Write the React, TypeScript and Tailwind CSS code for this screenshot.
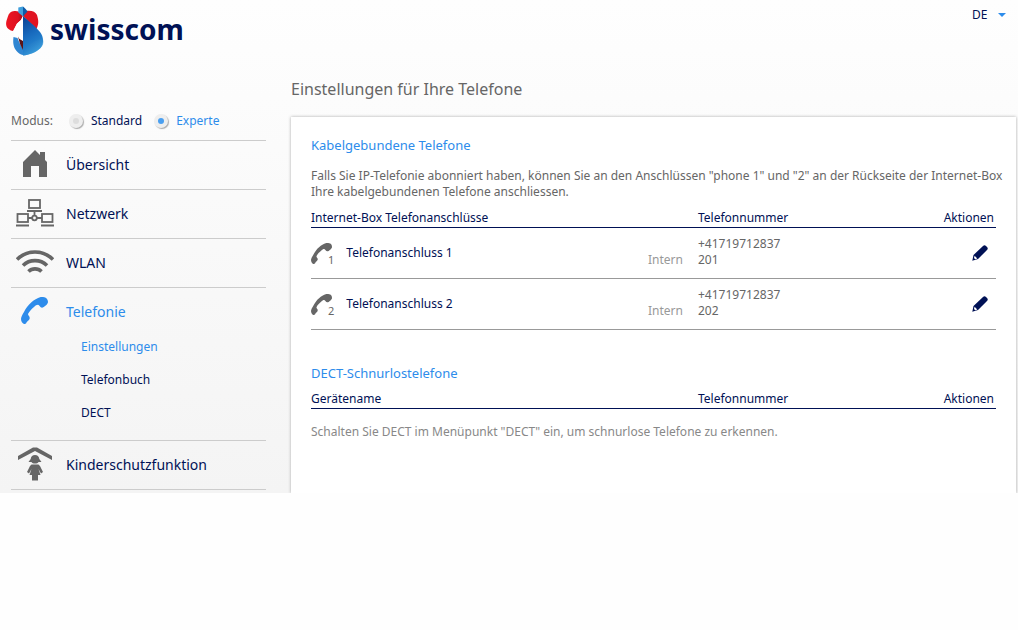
import { ReactNode, useState } from "react";

interface IPhoneLine {
  id: number;
  name: string;
  phone: string;
  intern: string;
}

const phoneLines: IPhoneLine[] = [
  { id: 1, name: "Telefonanschluss 1", phone: "+41719712837", intern: "201" },
  { id: 2, name: "Telefonanschluss 2", phone: "+41719712837", intern: "202" },
];

const subItems = ["Einstellungen", "Telefonbuch", "DECT"];

const Logo = () => (
  <svg width="38" height="50" viewBox="0 0 38 50" aria-hidden="true">
    <defs>
      <linearGradient id="logoRed" x1="0" y1="0" x2="1" y2="0">
        <stop offset="0" stopColor="#ee1522" />
        <stop offset="0.7" stopColor="#dd1120" />
        <stop offset="1" stopColor="#a80d18" />
      </linearGradient>
      <linearGradient id="logoBlue" x1="0" y1="0" x2="0.3" y2="1">
        <stop offset="0" stopColor="#0a3f90" />
        <stop offset="0.5" stopColor="#1769bd" />
        <stop offset="1" stopColor="#2a8fd6" />
      </linearGradient>
      <linearGradient id="logoLight" x1="0" y1="0" x2="1" y2="1">
        <stop offset="0" stopColor="#1b62b5" stopOpacity="0" />
        <stop offset="1" stopColor="#4db8ea" />
      </linearGradient>
    </defs>
    <path
      d="M17 10L12.5 5.5C10 4.5 7 5 5 6C2 8 2 11 0.7 14C-0.5 18 0 21 2.5 23C4 24.3 5.5 25 7 25L10.7 18L15 14Z"
      fill="url(#logoRed)"
    />
    <path
      d="M17 10L20 5C25 4 29.5 5.5 31 9C32 13 33.5 17 30.5 23Z"
      fill="#e01422"
    />
    <path d="M12.3 1.5L17 0.5V10.5L12.3 6.5Z" fill="#3f9fdc" />
    <path d="M17 0.5C19 2 20.5 4 21.5 5.5L17 10.5Z" fill="#0d5aa8" />
    <path
      d="M17 10L15 14L11 17.5L7.5 25L8.5 30L11.5 31L13 38L17 42Z"
      fill="#ffffff"
    />
    <path
      d="M7.5 31C6.5 38 8 43 12 46.5C13.5 48 15.5 49 17 49V43L14 38L11.5 32Z"
      fill="#2f86d2"
    />
    <path d="M12 30.5L13.5 33L17 35V44L14 38Z" fill="#5b1418" />
    <path
      d="M17 10C24 16 31 22 34 26C38 31 38 38 34.5 42C30 46.5 23 49 17 49.5Z"
      fill="url(#logoBlue)"
    />
    <path
      d="M17 49.5C18 42 26 34 37 33C38 37 37 40 34.5 42C30 46.5 23 49 17 49.5Z"
      fill="url(#logoLight)"
    />
  </svg>
);

const HomeIcon = () => (
  <svg width="24" height="27" viewBox="0 0 24 27" fill="currentColor">
    <path d="M12 0L17 5V2H22V10L24 12V27H16V16H8V27H0V12Z" />
  </svg>
);

const NetworkIcon = () => (
  <svg
    width="38"
    height="28"
    viewBox="0 0 38 28"
    fill="none"
    stroke="currentColor"
    strokeWidth="1.8"
  >
    <rect x="13" y="1" width="11" height="8" />
    <rect x="1.5" y="15" width="10.5" height="8" />
    <rect x="26" y="15" width="10.5" height="8" />
    <path d="M11 12H26M0 26.5H13M25 26.5H38M12 19H16M21 19H26M18.5 12V17" />
    <circle cx="18.5" cy="19" r="2.3" />
  </svg>
);

const WlanIcon = () => (
  <svg
    width="38"
    height="24"
    viewBox="0 0 38 24"
    fill="none"
    stroke="currentColor"
    strokeWidth="3.6"
  >
    <path d="M1 9.5C11 -0.5 27 -0.5 37 9.5" />
    <path d="M7 15.5C13.5 9 24.5 9 31 15.5" />
    <path d="M12.5 21.5C16 18 22 18 25.5 21.5" />
  </svg>
);

const PhoneIcon = ({ size }: { size: number }) => (
  <svg width={size} height={size} viewBox="0 0 27 27" fill="currentColor">
    <path d="M19.7 0C16 1 13 3 10.7 5C7 8 4.5 12 3 15C1.5 17.5 0 20 0 22C0 24.5 1.5 26.5 3 27C4 27 5 26.7 5.3 26C6 24 9 23 8.7 20.7C8.5 19 7 18.5 7 17C8.5 14 10.500 12 13 10C14.5 8.500 15.500 7.700 17 7.700C18.500 8 19 10.700 21 10.700C23 10.500 27 7 27 5C27 3 26 1.500 24.700 0.700C23 0 21 0 19.7 0Z" />
  </svg>
);

const ChildIcon = () => (
  <svg width="34" height="34" viewBox="0 0 34 34" fill="currentColor">
    <path d="M15 0.5H19L34 9V13L17 4L0 13V9Z" />
    <path d="M17 8C19.5 8 21 9.5 21.3 12L23.5 15H20.5C19.5 17 14.5 17 13.5 15H10.5L12.7 12C13 9.5 14.5 8 17 8Z" />
    <path d="M13.5 17.5H20.5L22 19L25 25L23 26.5L20.5 22L22.5 28H20V33.5H14V28H11.5L13.5 22L11 26.5L9 25L12 19Z" />
  </svg>
);

const PencilIcon = () => (
  <svg width="16" height="16" viewBox="0 0 16 16" fill="currentColor">
    <path
      d="M11 1C12 0 13 0 14 1L15 2C16 3 16 4 15 5L6 14L0.3 15.8L1.5 10ZM2.6 10.8L2 13L3.2 14.2L5.3 13.5Z"
      fillRule="evenodd"
    />
  </svg>
);

interface INavItemProps {
  label: string;
  icon: ReactNode;
  active?: boolean;
  children?: ReactNode;
}

const NavItem = ({ label, icon, active, children }: INavItemProps) => (
  <li className="border-b border-[#cccccc]">
    <a
      href="#"
      className={`flex h-12 items-center text-[14px] ${
        active ? "text-[#2d8ceb]" : "text-[#001155]"
      }`}
    >
      <span
        className={`mr-3 flex w-[43px] justify-center pb-[3px] pl-1 ${
          active ? "" : "text-[#666666]"
        }`}
      >
        {icon}
      </span>
      {label}
    </a>
    {children}
  </li>
);

interface IModeRadioProps {
  label: string;
  checked: boolean;
  onChange: () => void;
}

const ModeRadio = ({ label, checked, onChange }: IModeRadioProps) => (
  <label
    className={`flex items-center gap-2 ${
      checked ? "text-[#2d8ceb]" : "text-[#001155]"
    }`}
  >
    <input
      type="radio"
      name="mode"
      checked={checked}
      onChange={onChange}
      className="flex size-[14px] appearance-none items-center justify-center rounded-full bg-[#eeeeee] shadow-[1px_1px_1px_#aaaaaa] before:size-[6px] before:rounded-full before:bg-[#dddddd] checked:before:bg-[#4a9ff0]"
    />
    {label}
  </label>
);

const headCell = "pb-[1px] font-normal";

export default function App() {
  const [mode, setMode] = useState("Experte");

  return (
    <div className="min-h-screen bg-[#fefefe] font-['Noto_Sans',sans-serif] text-[12px] leading-4 text-[#666666]">
      <div className="bg-linear-to-b from-[#fefefe] to-[#f4f4f4]">
        <header className="flex items-start justify-between pt-[6px] pr-3 pl-[6px]">
          <a href="#" className="flex items-center gap-[6px] text-[#001155]">
            <Logo />
            <span className="pb-1 text-[28px] leading-8 font-bold">
              swisscom
            </span>
          </a>
          <div className="relative flex items-center pt-[1px]">
            <select
              aria-label="Sprache"
              className="w-[34px] appearance-none text-[#001155]"
            >
              <option>DE</option>
              <option>FR</option>
              <option>IT</option>
              <option>EN</option>
            </select>
            <svg
              width="8"
              height="4"
              viewBox="0 0 8 4"
              className="pointer-events-none absolute right-0"
            >
              <path d="M0 0H8L4 4Z" fill="#2d8ceb" />
            </svg>
          </div>
        </header>

        <div className="flex">
          <aside className="mr-[25px] ml-[11px] w-[255px] shrink-0 pt-[57px] pb-[3px]">
            <fieldset className="flex h-7 items-start gap-3 border-b border-[#cccccc]">
              <span className="mr-1">Modus:</span>
              {["Standard", "Experte"].map((m) => (
                <ModeRadio
                  key={m}
                  label={m}
                  checked={mode === m}
                  onChange={() => setMode(m)}
                />
              ))}
            </fieldset>
            <nav>
              <ul>
                <NavItem label="Übersicht" icon={<HomeIcon />} />
                <NavItem label="Netzwerk" icon={<NetworkIcon />} />
                <NavItem label="WLAN" icon={<WlanIcon />} />
                <NavItem label="Telefonie" icon={<PhoneIcon size={27} />} active>
                  <ul className="flex flex-col gap-[13px] pt-[1px] pb-[17px] pl-[70px] leading-5">
                    {subItems.map((item, i) => (
                      <li key={item}>
                        <a
                          href="#"
                          className={i === 0 ? "text-[#2d8ceb]" : "text-[#001155]"}
                        >
                          {item}
                        </a>
                      </li>
                    ))}
                  </ul>
                </NavItem>
                <NavItem label="Kinderschutzfunktion" icon={<ChildIcon />} />
              </ul>
            </nav>
          </aside>

          <main className="mr-[2px] flex min-w-0 grow flex-col pt-[21px]">
            <h1 className="mb-4 text-[16px] leading-6">
              Einstellungen für Ihre Telefone
            </h1>
            <div className="grow bg-white px-5 pt-[18px] shadow-[0_0_3px_#aaaaaa] [clip-path:inset(-3px_-3px_0_-3px)]">
              <h2 className="text-[13px] leading-5 text-[#2d8ceb]">
                Kabelgebundene Telefone
              </h2>
              <p className="mt-[13px] -mr-4">
                Falls Sie IP-Telefonie abonniert haben, können Sie an den
                Anschlüssen "phone 1" und "2" an der Rückseite der Internet-Box
                Ihre kabelgebundenen Telefone anschliessen.
              </p>
              <table className="mt-[10px] w-full table-fixed text-left">
                <colgroup>
                  <col className="w-[45.4%]" />
                  <col className="w-[76px]" />
                  <col />
                  <col className="w-20" />
                </colgroup>
                <thead className="border-b border-[#001155] text-[#001155]">
                  <tr>
                    <th colSpan={2} className={headCell}>
                      Internet-Box Telefonanschlüsse
                    </th>
                    <th className={headCell}>Telefonnummer</th>
                    <th className="pr-[2px] pb-[1px] text-right font-normal">
                      Aktionen
                    </th>
                  </tr>
                </thead>
                <tbody>
                  {phoneLines.map((line) => (
                    <tr key={line.id} className="border-b border-[#999999]">
                      <td>
                        <div className="flex items-center gap-3 text-[#001155]">
                          <span className="flex items-end text-[#666666]">
                            <PhoneIcon size={21} />
                            <span className="-ml-1 text-[11px] leading-2">
                              {line.id}
                            </span>
                          </span>
                          {line.name}
                        </div>
                      </td>
                      <td className="pt-2 pr-[15px] pb-[10px] text-right align-bottom text-[#999999]">
                        Intern
                      </td>
                      <td className="pt-2 pb-[10px]">
                        {line.phone}
                        <br />
                        {line.intern}
                      </td>
                      <td className="pr-2 text-right">
                        <button
                          aria-label={`${line.name} bearbeiten`}
                          className="align-middle text-[#001155]"
                        >
                          <PencilIcon />
                        </button>
                      </td>
                    </tr>
                  ))}
                </tbody>
              </table>

              <h2 className="mt-[33px] text-[13px] leading-5 text-[#2d8ceb]">
                DECT-Schnurlostelefone
              </h2>
              <table className="mt-2 w-full table-fixed text-left">
                <colgroup>
                  <col className="w-[56.5%]" />
                  <col />
                  <col className="w-20" />
                </colgroup>
                <thead className="border-b border-[#001155] text-[#001155]">
                  <tr>
                    <th className={headCell}>Gerätename</th>
                    <th className={headCell}>Telefonnummer</th>
                    <th className="pr-[2px] pb-[1px] text-right font-normal">
                      Aktionen
                    </th>
                  </tr>
                </thead>
                <tbody>
                  <tr>
                    <td colSpan={3} className="pt-[15px] text-[#888888]">
                      Schalten Sie DECT im Menüpunkt "DECT" ein, um schnurlose
                      Telefone zu erkennen.
                    </td>
                  </tr>
                </tbody>
              </table>
            </div>
          </main>
        </div>
      </div>
    </div>
  );
}
